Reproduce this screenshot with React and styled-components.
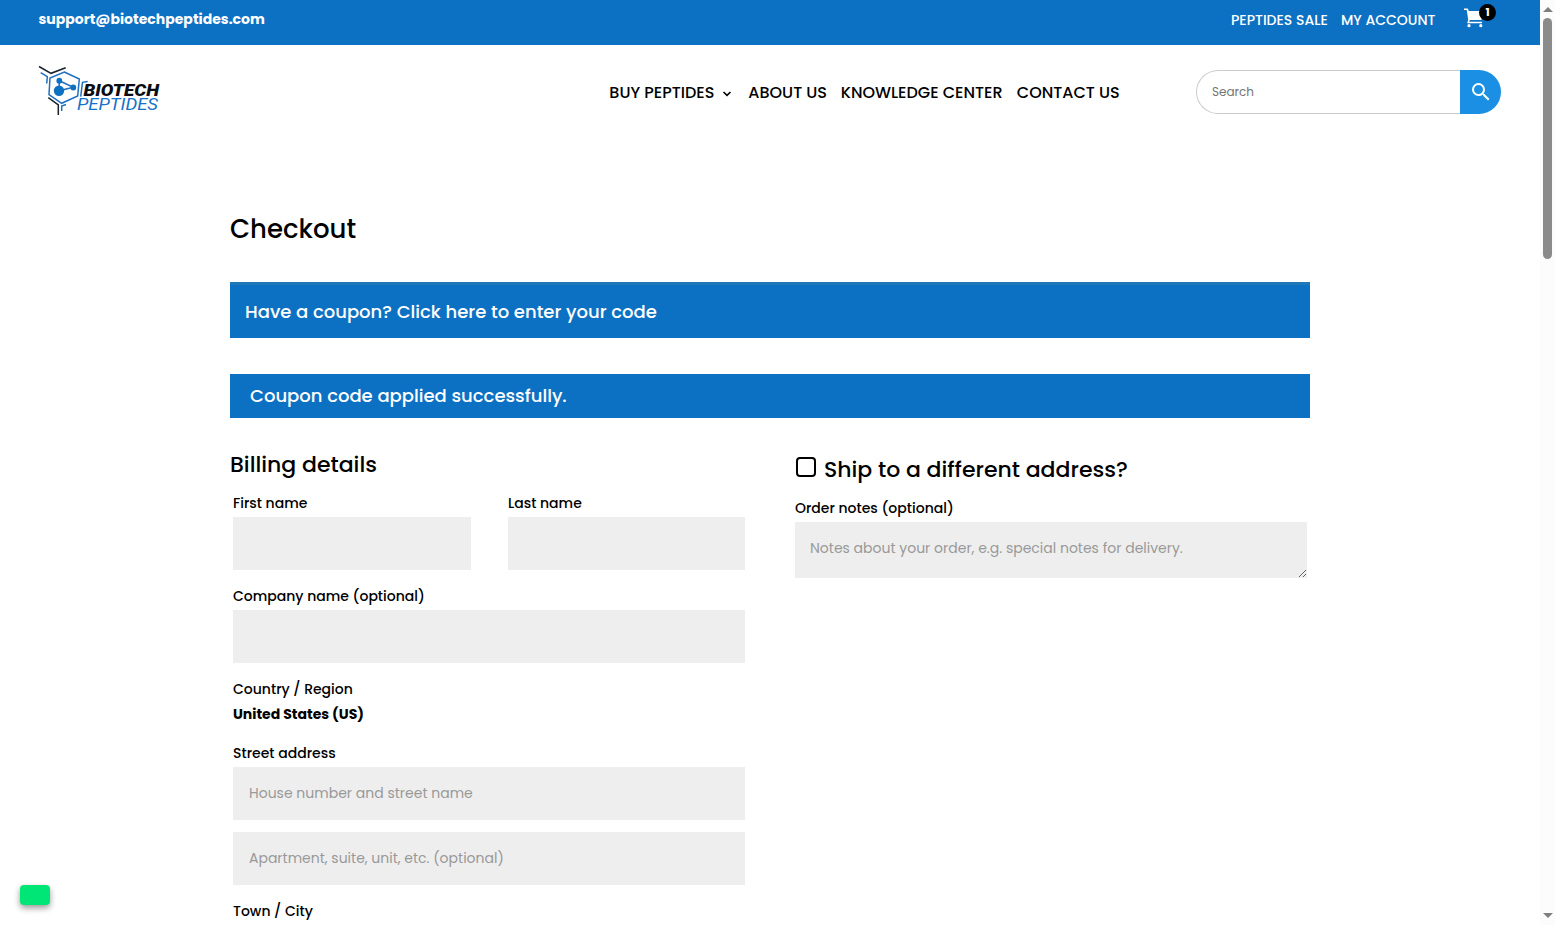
import React, { useState } from "react";
import styled, { createGlobalStyle } from "styled-components";

const GlobalStyle = createGlobalStyle`
  * {
    box-sizing: border-box;
  }
  body {
    margin: 0;
    overflow: hidden;
    background: #fff;
    color: #000;
    font-family: Poppins, Inter, "Open Sans", sans-serif;
  }
`;

const Window = styled.div`
  display: flex;
  width: 1555px;
  height: 925px;
  overflow: hidden;
`;
const Page = styled.div`
  flex: 1;
  overflow: hidden;
`;

const TopBar = styled.div`
  display: flex;
  align-items: flex-start;
  height: 45px;
  padding: 0 40px 0 38.5px;
  background: #0c71c3;
  color: #fff;
`;
const Email = styled.span`
  margin-right: auto;
  font-size: 14px;
  font-weight: 700;
  line-height: 38px;
  white-space: nowrap;
`;
const TopLink = styled.a`
  width: ${(props) => props.width}px;
  margin-right: 14px;
  font-size: 14px;
  font-weight: 500;
  line-height: 41px;
  white-space: nowrap;
`;
const Cart = styled.div`
  position: relative;
  width: 36px;
  height: 36px;
  margin-left: 14px;
  svg {
    display: block;
    margin-top: 8px;
  }
`;
const Badge = styled.span`
  position: absolute;
  top: 4px;
  left: 15px;
  width: 17px;
  height: 17px;
  border-radius: 50%;
  background: #000;
  font-size: 11px;
  font-weight: 700;
  line-height: 17px;
  text-align: center;
`;

const Header = styled.header`
  display: flex;
  align-items: flex-start;
  height: 95px;
  padding: 0 39px 0 37px;
`;
const LogoLink = styled.a`
  margin: 19px auto 0 0;
  svg {
    display: block;
  }
`;
const Nav = styled.nav`
  display: flex;
  margin-right: 77px;
`;
const NavLink = styled.a`
  display: flex;
  align-items: center;
  width: ${(props) => props.width}px;
  margin-left: 14px;
  font-size: 16px;
  font-weight: 500;
  line-height: 95px;
  white-space: nowrap;
  svg {
    margin: 3px 0 0 8px;
  }
`;
const Search = styled.form`
  display: flex;
  width: 305px;
  height: 44px;
  margin-top: 25px;
`;
const SearchInput = styled.input`
  flex: 1;
  min-width: 0;
  padding: 0 15px;
  border: 1px solid #ccc;
  border-right: 0;
  border-radius: 22px 0 0 22px;
  outline: none;
  font-family: inherit;
  font-size: 12px;
  &::placeholder {
    color: #757575;
    opacity: 1;
  }
`;
const SearchButton = styled.button`
  display: flex;
  align-items: center;
  justify-content: center;
  width: 41px;
  padding: 0;
  border: 0;
  border-radius: 0 22px 22px 0;
  background: #1a8fe3;
`;

const Main = styled.main`
  width: 1080px;
  margin: 0 auto;
  padding-top: 72px;
`;
const Title = styled.h1`
  height: 34px;
  margin: 0 0 36px;
  font-size: 26px;
  font-weight: 500;
  line-height: 34px;
`;
const CouponToggle = styled.div`
  height: 56px;
  margin-bottom: 36px;
  padding-left: 15px;
  border-top: 3px solid #1e78b8;
  background: #0c71c3;
  color: #fff;
  font-size: 18px;
  font-weight: 500;
  line-height: 53px;
`;
const Message = styled.div`
  height: 44px;
  padding-left: 20px;
  background: #0c71c3;
  color: #fff;
  font-size: 18px;
  font-weight: 500;
  line-height: 43px;
`;

const Columns = styled.div`
  display: flex;
  justify-content: space-between;
  padding-top: 32px;
`;
const Column = styled.section`
  width: 518px;
  padding: ${(props) => (props.$shipping ? "5px 3px 0" : "0 3px")};
`;
const Heading = styled.h3`
  display: flex;
  align-items: center;
  height: 28px;
  margin: 0 0 15px -3px;
  font-size: 22px;
  font-weight: 500;
  white-space: nowrap;
`;
const Checkbox = styled.button`
  width: 20px;
  height: 20px;
  margin: -5px 8px 0 4px;
  padding: 0;
  border: 2px solid #000;
  border-radius: 4px;
  background: ${(props) => (props.$checked ? "#000" : "#fff")};
`;
const Row = styled.div`
  display: flex;
  justify-content: space-between;
`;
const Field = styled.div`
  width: ${(props) => props.width || "100%"};
  margin-bottom: 16px;
`;
const Label = styled.label`
  display: block;
  height: 24px;
  font-size: 14px;
  font-weight: 500;
  line-height: 20px;
`;
const Country = styled.strong`
  display: block;
  height: 24px;
  font-size: 14px;
  font-weight: 700;
  line-height: 22px;
`;
const Input = styled.input`
  display: block;
  width: 100%;
  height: 53px;
  padding: 0 16px;
  border: 0;
  background: #eee;
  outline: none;
  font-family: inherit;
  font-size: 14px;
  & + & {
    margin-top: 12px;
  }
  &::placeholder {
    color: #999;
    opacity: 1;
  }
`;
const Notes = styled.textarea`
  display: block;
  width: 100%;
  height: 56px;
  padding: 15px;
  border: 0;
  background: #eee;
  outline: none;
  overflow: hidden;
  resize: vertical;
  font-family: inherit;
  font-size: 14px;
  line-height: 22px;
  &::placeholder {
    color: #999;
    opacity: 1;
  }
`;

const ChatButton = styled.button`
  position: fixed;
  bottom: 20px;
  left: 20px;
  width: 30px;
  height: 20px;
  padding: 0;
  border: 0;
  border-radius: 4px;
  background: #00e676;
  box-shadow: 0 3px 6px rgba(0, 0, 0, 0.4);
`;

const Scrollbar = styled.div`
  display: flex;
  flex-direction: column;
  align-items: center;
  width: 15px;
  padding: 7px 0;
  background: #fcfcfc;
`;
const Thumb = styled.div`
  width: 9px;
  height: 241px;
  margin: 6px 0 auto;
  border-radius: 5px;
  background: #8b8b8b;
`;
const Arrow = styled.div`
  border: 5px solid transparent;
  border-top: ${(props) => (props.$up ? "0" : "5px solid #7f7f7f")};
  border-bottom: ${(props) => (props.$up ? "5px solid #7f7f7f" : "0")};
`;

function Logo() {
  return (
    <svg width="126" height="54" viewBox="0 0 126 54" fill="none">
      <g stroke="#17242f" strokeWidth="1.5">
        <path d="M2 2.5L14 9.3L28.7 3.7" />
        <path d="M11.3 33.7L21.3 41V51" />
      </g>
      <g stroke="#1f70c1" strokeWidth="1.5">
        <path d="M27.3 8L42.3 15L40.7 32L24.7 39.3L12 30.5L13 14Z" />
        <path d="M3.7 8.7L10.3 12.7L9.7 19.5" />
        <path d="M24.7 47V42L29 40.5" />
        <path d="M43.7 32.7L45.5 18.3L50.7 17.5" />
        <path d="M22.3 16.7L36.3 23.3L22 26.7Z" />
      </g>
      <g fill="#0c71c3">
        <circle cx="22.3" cy="16.7" r="2.9" />
        <circle cx="22" cy="26.7" r="5.2" />
        <circle cx="36.3" cy="23.5" r="2.9" />
      </g>
      <text
        x="46.5"
        y="32.3"
        fill="#0b0d12"
        fontFamily="Roboto, sans-serif"
        fontSize="17"
        fontStyle="italic"
        fontWeight="900"
        textLength="75.5"
        lengthAdjust="spacingAndGlyphs"
      >
        BIOTECH
      </text>
      <text
        x="40"
        y="46.3"
        fill="#1671c8"
        fontFamily="Roboto, sans-serif"
        fontSize="16"
        fontStyle="italic"
        textLength="81"
        lengthAdjust="spacingAndGlyphs"
      >
        PEPTIDES
      </text>
    </svg>
  );
}

function App() {
  const [shipping, setShipping] = useState(false);

  return (
    <Window>
      <GlobalStyle />
      <Page>
        <TopBar>
          <Email>support@biotechpeptides.com</Email>
          <TopLink width={96}>PEPTIDES SALE</TopLink>
          <TopLink width={95}>MY ACCOUNT</TopLink>
          <Cart>
            <svg width="21" height="20" viewBox="0 0 21 20" fill="#fff">
              <path d="M0 .5H3.8L4.8 3H20L17.3 12H5.7L5.2 13.8H18V15.3H3.2L4.2 11.5L2.7 2H0Z" />
              <circle cx="5" cy="17.7" r="1.6" />
              <circle cx="16.8" cy="17.7" r="1.6" />
            </svg>
            <Badge>1</Badge>
          </Cart>
        </TopBar>

        <Header>
          <LogoLink>
            <Logo />
          </LogoLink>
          <Nav>
            <NavLink width={125}>
              BUY PEPTIDES
              <svg width="10" height="6" viewBox="0 0 10 6" fill="none">
                <path d="M1.5 1L5 4.3L8.5 1" stroke="#000" strokeWidth="1.6" />
              </svg>
            </NavLink>
            <NavLink width={78.5}>ABOUT US</NavLink>
            <NavLink width={162}>KNOWLEDGE CENTER</NavLink>
            <NavLink width={102.2}>CONTACT US</NavLink>
          </Nav>
          <Search onSubmit={(e) => e.preventDefault()}>
            <SearchInput placeholder="Search" />
            <SearchButton>
              <svg width="24" height="24" viewBox="0 0 24 24" fill="#fff">
                <path d="M15.5 14h-.79l-.28-.27A6.47 6.47 0 0 0 16 9.5 6.5 6.5 0 1 0 9.5 16c1.61 0 3.09-.59 4.23-1.57l.27.28v.79l5 4.99L20.49 19l-4.99-5zm-6 0a4.5 4.5 0 1 1 0-9 4.5 4.5 0 0 1 0 9z" />
              </svg>
            </SearchButton>
          </Search>
        </Header>

        <Main>
          <Title>Checkout</Title>
          <CouponToggle>Have a coupon? Click here to enter your code</CouponToggle>
          <Message>Coupon code applied successfully.</Message>

          <Columns>
            <Column>
              <Heading>Billing details</Heading>
              <Row>
                <Field width="238px">
                  <Label>First name</Label>
                  <Input />
                </Field>
                <Field width="237px">
                  <Label>Last name</Label>
                  <Input />
                </Field>
              </Row>
              <Field>
                <Label>Company name (optional)</Label>
                <Input />
              </Field>
              <Field>
                <Label>Country / Region</Label>
                <Country>United States (US)</Country>
              </Field>
              <Field>
                <Label>Street address</Label>
                <Input placeholder="House number and street name" />
                <Input placeholder="Apartment, suite, unit, etc. (optional)" />
              </Field>
              <Label>Town / City</Label>
            </Column>

            <Column $shipping>
              <Heading>
                <Checkbox
                  $checked={shipping}
                  onClick={() => setShipping(!shipping)}
                />
                Ship to a different address?
              </Heading>
              <Label>Order notes (optional)</Label>
              <Notes placeholder="Notes about your order, e.g. special notes for delivery." />
            </Column>
          </Columns>
        </Main>
        <ChatButton />
      </Page>

      <Scrollbar>
        <Arrow $up />
        <Thumb />
        <Arrow />
      </Scrollbar>
    </Window>
  );
}

export default App;
